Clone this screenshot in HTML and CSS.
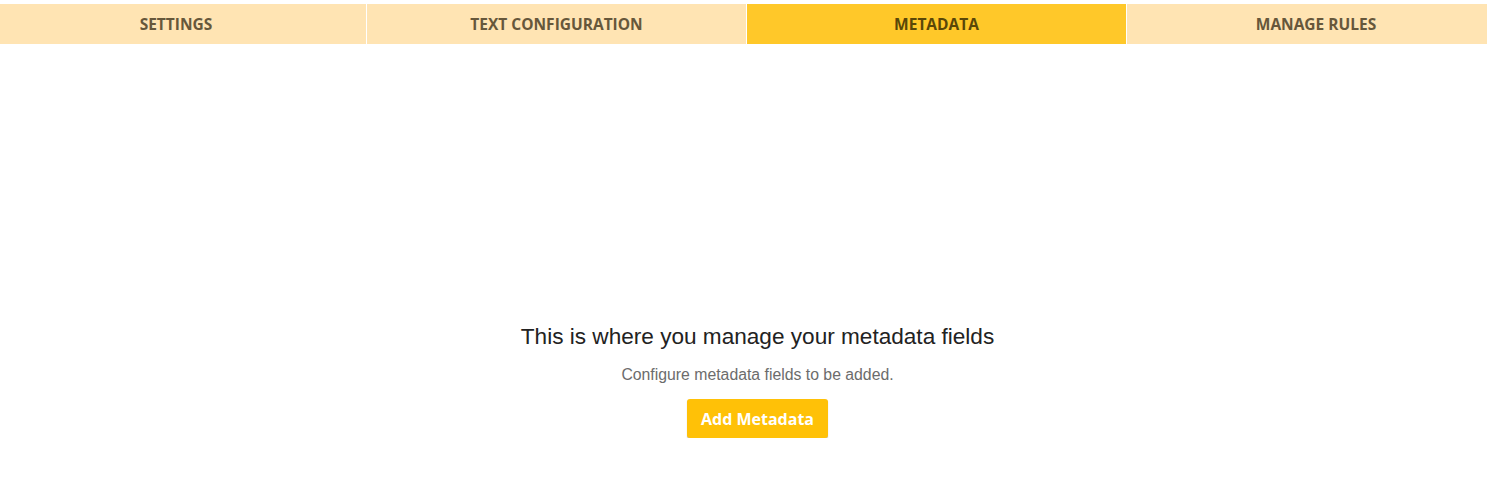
FILE: index.html
```html
<!DOCTYPE html>
<html lang="en">
<head>
  <meta charset="UTF-8">
  <meta name="viewport" content="width=device-width, initial-scale=1.0">
  <title>Metadata</title>
  <link rel="stylesheet" href="styles.css">
</head>
<body>
  <nav class="tabs">
    <button class="tab tab-first">Settings</button>
    <button class="tab">Text Configuration</button>
    <button class="tab active">Metadata</button>
    <button class="tab tab-last">Manage Rules</button>
  </nav>
  <main class="empty">
    <h2 class="empty-title">This is where you manage your metadata fields</h2>
    <p class="empty-text">Configure metadata fields to be added.</p>
    <button class="btn-add">Add Metadata</button>
  </main>
</body>
</html>
```

FILE: styles.css
```css
:root {
  --tab-bg: #ffe4b3;
  --tab-active: #ffc829;
  --tab-text: #66573b;
  --tab-active-text: #5a4708;
  --btn-bg: #ffc107;
}
* { box-sizing: border-box; margin: 0; padding: 0; }
body {
  background: #fff;
  padding-top: 4px;
  font-family: Arial, "Liberation Sans", sans-serif;
}
/* Tab strip */
.tabs {
  display: grid;
  grid-template-columns: 366px 379px 379px 1fr;
  column-gap: 1px;
}
.tab {
  height: 40px;
  border: none;
  background: var(--tab-bg);
  color: var(--tab-text);
  font-family: "Open Sans", sans-serif;
  font-weight: 700;
  font-size: 15.5px;
  text-transform: uppercase;
  cursor: pointer;
}
.tab-first { padding-right: 14px; }
.tab-last { padding-left: 18px; }
.tab.active {
  background: var(--tab-active);
  color: var(--tab-active-text);
}
/* Empty state */
.empty {
  display: flex;
  flex-direction: column;
  align-items: center;
  padding: 279px 0 0 28px;
}
.empty-title {
  font-weight: 400;
  font-size: 22.6px;
  line-height: 28px;
  color: #222;
}
.empty-text {
  margin-top: 14px;
  font-size: 15.8px;
  line-height: 20px;
  color: #6c6c6c;
}
.btn-add {
  margin-top: 14px;
  width: 141px;
  height: 39px;
  border: none;
  border-radius: 3px;
  background: var(--btn-bg);
  box-shadow: 0 1px 1px rgba(0,0,0,0.25);
  color: #fff;
  font-family: "Open Sans", sans-serif;
  font-weight: 700;
  font-size: 16px;
  cursor: pointer;
}
```
